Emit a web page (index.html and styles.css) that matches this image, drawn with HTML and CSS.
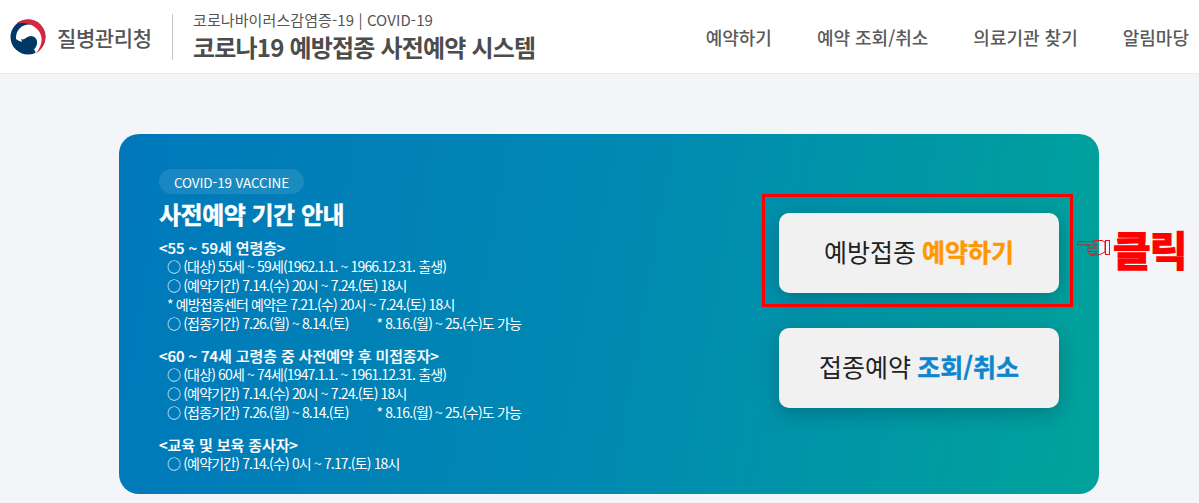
FILE: index.html
```html
<!DOCTYPE html>
<html lang="ko">
<head>
<meta charset="utf-8">
<meta name="viewport" content="width=device-width, initial-scale=1">
<title>코로나19 예방접종 사전예약 시스템</title>
<link rel="stylesheet" href="styles.css">
</head>
<body>
<header class="top">
  <div class="brand">
    <svg class="emblem" viewBox="0 0 36 36" width="36" height="36">
      <circle cx="18" cy="18" r="17.5" fill="#003764"/>
      <path d="M6 20 C5.500 10 13 5 20 5.500 C28 6.500 33 13 33 21 C33 26 30 31 26 34.500 L24 30 C20 22 10 24 6 20 Z" fill="#fff"/>
      <path d="M11 20 C14 22 17 17 21 17 C25 17 28 21 27 25 C26 29 23 33 17 33 L14 27 Z" fill="#003764"/>
      <path d="M7 4.500 C13 -1 24 -1 30 5 C38 13 37 27 26 34.500 C32 27 34 18 28 11 C22 4 13 3 7 4.500 Z" fill="#d9263c"/>
    </svg>
    <span class="brand-name">질병관리청</span>
  </div>
  <div class="system">
    <p class="system-sub">코로나바이러스감염증-19 | COVID-19</p>
    <p class="system-title">코로나19 예방접종 사전예약 시스템</p>
  </div>
  <nav class="menu">
    <a href="#">예약하기</a>
    <a href="#">예약 조회/취소</a>
    <a href="#">의료기관 찾기</a>
    <a href="#">알림마당</a>
  </nav>
</header>

<main class="page">
  <section class="card">
    <div class="info">
      <span class="pill">COVID-19 VACCINE</span>
      <h1 class="info-title">사전예약 기간 안내</h1>

      <div class="group">
        <h2>&lt;55 ~ 59세 연령층&gt;</h2>
        <p>○ (대상) 55세 ~ 59세(1962.1.1. ~ 1966.12.31. 출생)</p>
        <p>○ (예약기간) 7.14.(수) 20시 ~ 7.24.(토) 18시</p>
        <p>* 예방접종센터 예약은 7.21.(수) 20시 ~ 7.24.(토) 18시</p>
        <p>○ (접종기간) 7.26.(월) ~ 8.14.(토)<span class="note">* 8.16.(월) ~ 25.(수)도 가능</span></p>
      </div>

      <div class="group">
        <h2>&lt;60 ~ 74세 고령층 중 사전예약 후 미접종자&gt;</h2>
        <p>○ (대상) 60세 ~ 74세(1947.1.1. ~ 1961.12.31. 출생)</p>
        <p>○ (예약기간) 7.14.(수) 20시 ~ 7.24.(토) 18시</p>
        <p>○ (접종기간) 7.26.(월) ~ 8.14.(토)<span class="note">* 8.16.(월) ~ 25.(수)도 가능</span></p>
      </div>

      <div class="group">
        <h2>&lt;교육 및 보육 종사자&gt;</h2>
        <p>○ (예약기간) 7.14.(수) 0시 ~ 7.17.(토) 18시</p>
      </div>
    </div>

    <div class="actions">
      <a class="action" href="#">예방접종 <b class="orange">예약하기</b></a>
      <a class="action" href="#">접종예약 <b class="blue">조회/취소</b></a>
    </div>
  </section>

  <div class="red-box"></div>
  <div class="click-note">
    <svg class="hand" viewBox="0 0 33 16" width="33" height="16" fill="none" stroke="#e8101a" stroke-width="1">
      <path d="M1.500 1.500 H15 L19 0.500 H25 L28 2 V12 L25 13.500 C22 15.500 17 15.500 14 15 C11 14 11 12 12.500 11.500 C10 11 10 8.500 11.500 8 C10.500 7 10.500 5.500 12 5 H1.500 C0 4.500 0 2 1.500 1.500 Z"/>
      <path d="M12 8 H20 M12.500 11.500 H20 M14 15 C16 14 18 14 20 13 M15 1.500 L20 5 L17 6.500 M12 5 H17"/>
      <rect x="28.500" y="0.500" width="4" height="14"/>
    </svg>
    <span class="click-text">클릭</span>
  </div>
</main>
</body>
</html>
```

FILE: styles.css
```css
* {
  box-sizing: border-box;
}
html, body {
  margin: 0;
  height: 100%;
}
body {
  background: #f4f5f8;
  font-family: "Noto Sans CJK KR", "Noto Sans", sans-serif;
  overflow: hidden;
}
p, h1, h2 {
  margin: 0;
}
a {
  color: inherit;
  text-decoration: none;
}

/* header */
.top {
  display: flex;
  align-items: center;
  height: 74px;
  padding: 0 10px;
  background: #fff;
  border-bottom: 1px solid #e8eaef;
}
.brand {
  display: flex;
  align-items: center;
  gap: 11px;
  width: 163px;
  height: 46px;
  border-right: 1px solid #c8c8c8;
}
.brand-name {
  font-size: 21px;
  font-weight: 500;
  letter-spacing: -0.4px;
  color: #555;
}
.system {
  margin-left: 20px;
}
.system-sub {
  font-size: 15px;
  line-height: 21px;
  letter-spacing: 0.1px;
  color: #555;
}
.system-title {
  font-size: 24px;
  line-height: 34px;
  font-weight: 700;
  letter-spacing: -0.8px;
  color: #4c4c4c;
}
.menu {
  display: flex;
  gap: 45px;
  margin-left: auto;
  font-size: 18px;
  font-weight: 500;
  color: #5a5a5a;
}

/* main card */
.page {
  position: relative;
  padding-top: 60px;
}
.card {
  display: flex;
  justify-content: space-between;
  width: 980px;
  height: 360px;
  margin-left: 119px;
  padding: 35px 40px 0;
  border-radius: 20px;
  background: linear-gradient(100deg, #0078bb 0%, #0089b2 50%, #00a39b 100%);
  color: #fff;
}
.pill {
  display: inline-block;
  height: 25px;
  padding: 0 15px;
  border-radius: 13px;
  background: rgba(255, 255, 255, 0.1);
  font-size: 13.5px;
  line-height: 27px;
  letter-spacing: -0.1px;
}
.info-title {
  margin-top: 4px;
  font-size: 24px;
  line-height: 32px;
  font-weight: 700;
  letter-spacing: -0.5px;
  -webkit-text-stroke: 0.4px #fff;
}
.group {
  margin-top: 13px;
  font-size: 14px;
  line-height: 19px;
  letter-spacing: -0.85px;
}
.info-title + .group {
  margin-top: 8px;
}
.group h2 {
  font-size: 15px;
  line-height: 19px;
  font-weight: 500;
  letter-spacing: -0.1px;
  -webkit-text-stroke: 0.2px #fff;
}
.group p {
  padding-left: 8px;
}
.note {
  margin-left: 28px;
}

/* buttons */
.actions {
  display: flex;
  flex-direction: column;
  gap: 35px;
  margin: 44px 0 0;
}
.action {
  display: flex;
  align-items: center;
  justify-content: center;
  gap: 6px;
  width: 280px;
  height: 80px;
  padding-bottom: 4px;
  border-radius: 10px;
  background: #f1f1f2;
  box-shadow: 0 5px 20px rgba(0, 40, 60, 0.3);
  font-size: 25px;
  color: #222;
}
.orange {
  color: #ff9800;
  -webkit-text-stroke: 0.4px #ff9800;
}
.blue {
  color: #0b86cf;
  -webkit-text-stroke: 0.4px #0b86cf;
}

/* annotation drawn over the screenshot */
.red-box {
  position: absolute;
  left: 762px;
  top: 120px;
  width: 311px;
  height: 113px;
  border: 3px solid #ff0000;
}
.click-note {
  position: absolute;
  left: 1077px;
  top: 152px;
  display: flex;
  align-items: center;
  gap: 3px;
}
.click-text {
  font-size: 41px;
  line-height: 44px;
  font-weight: 700;
  letter-spacing: -1px;
  color: #ff0000;
  -webkit-text-stroke: 1.5px #ff0000;
}
```
